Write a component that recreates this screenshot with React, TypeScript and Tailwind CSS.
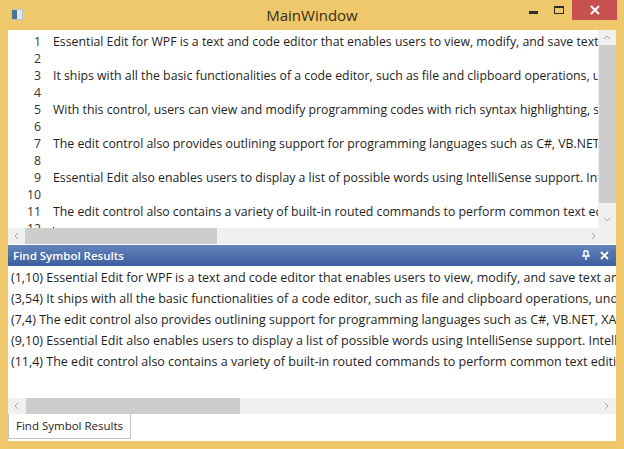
import type { ReactNode } from 'react'

const lines = [
  'Essential Edit for WPF is a text and code editor that enables users to view, modify, and save text and code files.',
  '',
  'It ships with all the basic functionalities of a code editor, such as file and clipboard operations, undo and redo.',
  '',
  'With this control, users can view and modify programming codes with rich syntax highlighting, syntax coloring.',
  '',
  'The edit control also provides outlining support for programming languages such as C#, VB.NET, XAML and SQL.',
  '',
  'Essential Edit also enables users to display a list of possible words using IntelliSense support. IntelliSense.',
  '',
  'The edit control also contains a variety of built-in routed commands to perform common text editing tasks.',
  '',
]

const results = [
  '(1,10) Essential Edit for WPF is a text and code editor that enables users to view, modify, and save text and code files.',
  '(3,54) It ships with all the basic functionalities of a code editor, such as file and clipboard operations, undo and redo.',
  '(7,4) The edit control also provides outlining support for programming languages such as C#, VB.NET, XAML and SQL.',
  '(9,10) Essential Edit also enables users to display a list of possible words using IntelliSense support. IntelliSense.',
  '(11,4) The edit control also contains a variety of built-in routed commands to perform common text editing tasks.',
]

const font = "font-['Segoe_UI','Open_Sans',sans-serif]"

function Arrow({ dir }: { dir: 'left' | 'right' | 'up' | 'down' }) {
  const d = {
    left: 'M5 1 L2 4 L5 7',
    right: 'M2 1 L5 4 L2 7',
    up: 'M1 5 L4 2 L7 5',
    down: 'M1 2 L4 5 L7 2',
  }[dir]
  return (
    <svg width="8" height="8" viewBox="0 0 8 8" className="shrink-0">
      <path d={d} fill="none" stroke="#a6a6a6" strokeWidth="1" />
    </svg>
  )
}

function HScroll({ thumbLeft, thumbWidth, children }: { thumbLeft: number; thumbWidth: number; children?: ReactNode }) {
  return (
    <div className="h-[16px] bg-[#f0f0f0] flex items-center relative shrink-0">
      <div className="w-[17px] flex justify-center">
        <Arrow dir="left" />
      </div>
      <div
        className="absolute top-0 h-[16px] bg-[#cdcdcd]"
        style={{ left: thumbLeft, width: thumbWidth }}
      />
      <div className="flex-1" />
      {children}
    </div>
  )
}

export default function App() {
  return (
    <div className={`w-[624px] h-[449px] bg-[#eec86b] flex flex-col overflow-hidden ${font}`}>
      {/* Title bar */}
      <div className="h-[30px] relative flex items-center shrink-0">
        <div className="absolute left-[11px] top-[9px] w-[12px] h-[11px] bg-[#f4f4f4] border border-[#b9c3cc] flex">
          <div className="w-[5px] h-full bg-[#4d7390]" />
          <div className="flex-1 bg-[#dbe7ef]" />
        </div>
        <div className="flex-1 text-center text-[15px] text-[#3b2e16] leading-none pt-[1px]">MainWindow</div>
        <div className="absolute right-[7px] top-0 flex items-start">
          <div className="w-[26px] h-[20px] flex items-center justify-center">
            <div className="w-[9px] h-[3px] bg-[#2c2c2c] mt-[4px]" />
          </div>
          <div className="w-[26px] h-[20px] flex items-center justify-center">
            <div className="w-[10px] h-[8px] border border-[#2c2c2c] border-t-2" />
          </div>
          <div className="w-[45px] h-[20px] bg-[#c75050] flex items-center justify-center">
            <svg width="10" height="10" viewBox="0 0 10 10">
              <path d="M1 1 L9 9 M9 1 L1 9" stroke="#fff" strokeWidth="2" />
            </svg>
          </div>
        </div>
      </div>

      {/* Client area */}
      <div className="mx-[8px] mb-[8px] flex-1 flex flex-col bg-white min-h-0">
        {/* Editor */}
        <div className="h-[198px] flex shrink-0">
          <div className="flex-1 overflow-hidden pt-[4px]">
            {lines.map((t, i) => (
              <div key={i} className="flex h-[17px] items-center text-[12.3px] text-[#1e1e1e] whitespace-nowrap">
                <div className="w-[33px] text-right text-[#333] shrink-0">{i + 1}</div>
                <div className="w-[12px] shrink-0" />
                <div className="relative">
                  {i === 11 && <div className="absolute left-0 top-[-3px] w-[1px] h-[15px] bg-[#222]" />}
                  {t}
                </div>
              </div>
            ))}
          </div>
          <div className="w-[18px] bg-[#f0f0f0] flex flex-col items-center shrink-0">
            <div className="h-[15px] flex items-center"><Arrow dir="up" /></div>
            <div className="w-[17px] h-[158px] bg-[#cdcdcd]" />
            <div className="flex-1" />
            <div className="h-[17px] flex items-center"><Arrow dir="down" /></div>
          </div>
        </div>
        <HScroll thumbLeft={17} thumbWidth={192}>
          <div className="w-[28px] flex justify-start pl-[2px]">
            <Arrow dir="right" />
          </div>
        </HScroll>

        {/* Find Symbol Results header */}
        <div className="h-[21px] mt-[1px] bg-gradient-to-b from-[#6283bb] to-[#3e5f9d] flex items-center px-[5px] shrink-0">
          <div className="flex-1 text-white text-[11.5px] font-semibold leading-none">Find Symbol Results</div>
          <svg width="10" height="11" viewBox="0 0 10 11" className="mr-[9px]">
            <path d="M3 1 H7 M3 1 V6 M7 1 V6 M1 6 H9 M5 6 V10" stroke="#fff" strokeWidth="1.5" fill="none" />
          </svg>
          <svg width="9" height="9" viewBox="0 0 9 9" className="mr-[2px]">
            <path d="M1 1 L8 8 M8 1 L1 8" stroke="#fff" strokeWidth="1.8" />
          </svg>
        </div>

        {/* Results */}
        <div className="flex-1 overflow-hidden pt-[2px] min-h-0">
          {results.map((r, i) => (
            <div
              key={i}
              className="h-[21px] flex items-center pl-[3px] text-[12.5px] text-[#1e1e1e] whitespace-nowrap"
            >
              {r}
            </div>
          ))}
        </div>
        <HScroll thumbLeft={18} thumbWidth={214}>
          <div className="w-[18px] flex justify-center">
            <Arrow dir="right" />
          </div>
        </HScroll>

        {/* Tab strip */}
        <div className="h-[27px] flex items-start shrink-0 bg-white">
          <div className="h-[25px] border border-t-0 border-[#c4c4c4] bg-white flex items-center px-[7px] text-[11.5px] text-[#1e1e1e]">
            Find Symbol Results
          </div>
        </div>
      </div>
    </div>
  )
}
